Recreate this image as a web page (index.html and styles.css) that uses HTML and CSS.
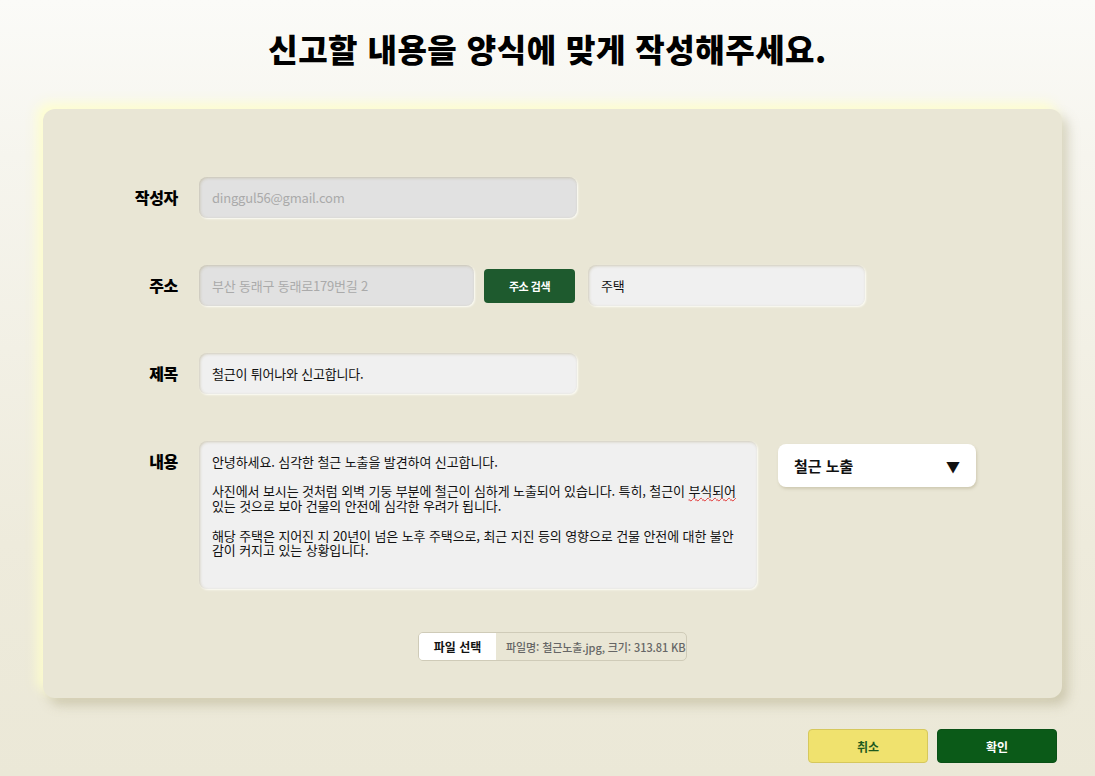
FILE: index.html
```html
<!DOCTYPE html>
<html lang="ko">
<head>
<meta charset="utf-8">
<title>신고하기</title>
<link rel="stylesheet" href="styles.css">
</head>
<body>
<div class="page">
  <h1 class="title">신고할 내용을 양식에 맞게 작성해주세요.</h1>
  <section class="card">
    <div class="row">
      <label class="label">작성자</label>
      <input class="field field-gray w378" type="text" placeholder="dinggul56@gmail.com">
    </div>
    <div class="row">
      <label class="label">주소</label>
      <input class="field field-gray w275" type="text" placeholder="부산 동래구 동래로179번길 2">
      <button class="btn-search" type="button">주소 검색</button>
      <input class="field w277 gap13" type="text" value="주택">
    </div>
    <div class="row">
      <label class="label">제목</label>
      <input class="field w378" type="text" value="철근이 튀어나와 신고합니다.">
    </div>
    <div class="row row-top">
      <label class="label">내용</label>
      <div class="area">안녕하세요. 심각한 철근 노출을 발견하여 신고합니다.

사진에서 보시는 것처럼 외벽 기둥 부분에 철근이 심하게 노출되어 있습니다. 특히, 철근이 <span class="spell">부식되어</span>
있는 것으로 보아 건물의 안전에 심각한 우려가 됩니다.

해당 주택은 지어진 지 20년이 넘은 노후 주택으로, 최근 지진 등의 영향으로 건물 안전에 대한 불안
감이 커지고 있는 상황입니다.</div>
      <div class="select"><span>철근 노출</span><span class="arrow">▼</span></div>
    </div>
    <div class="file">
      <span class="file-btn">파일 선택</span>
      <span class="file-name">파일명: 철근노출.jpg, 크기: 313.81 KB</span>
    </div>
  </section>
  <div class="actions">
    <button class="btn btn-cancel" type="button">취소</button>
    <button class="btn btn-ok" type="button">확인</button>
  </div>
</div>
</body>
</html>
```
FILE: styles.css
```css
* { box-sizing: border-box; }
html, body {
  margin: 0;
  height: 100%;
}
body {
  font-family: "Noto Sans CJK KR", "Noto Sans", sans-serif;
  background: linear-gradient(180deg, #fbfbf8 0%, #f6f5ee 20%, #eeebdc 70%, #ebe8d7 100%);
  color: #111;
  overflow: hidden;
}
.page {
  width: 1095px;
  height: 776px;
  padding-top: 28px;
}
.title {
  margin: 0;
  text-align: center;
  font-size: 32px;
  font-weight: 900;
  letter-spacing: 0.5px;
  line-height: 40px;
  color: #000;
}
.card {
  margin: 41px 33px 0 43px;
  height: 589px;
  background: #e9e6d5;
  border-radius: 12px;
  box-shadow: -6px -6px 12px rgba(255, 255, 205, 0.9), 6px 7px 12px rgba(150, 140, 100, 0.35);
  padding: 68px 0 0 90px;
  display: flex;
  flex-direction: column;
  gap: 47px;
}
.row {
  display: flex;
  align-items: center;
}
.row-top { align-items: flex-start; }
.label {
  width: 45px;
  margin-right: 21px;
  text-align: right;
  font-size: 16px;
  font-weight: 900;
  letter-spacing: -0.3px;
  line-height: 41px;
  color: #000;
  white-space: nowrap;
}
.field {
  height: 41px;
  border: none;
  border-radius: 8px;
  background: #f0f0f0;
  padding: 0 13px;
  font-family: inherit;
  font-size: 13px;
  color: #111;
  letter-spacing: -0.2px;
  outline: none;
  box-shadow: inset 1px 1px 3px rgba(170, 160, 120, 0.45), 1px 1px 2px rgba(255, 255, 250, 0.9);
}
.field-gray { background: #e1e1e1; }
.field::placeholder { color: #aaa; }
.w378 { width: 378px; }
.w275 { width: 275px; }
.w277 { width: 277px; }
.gap13 { margin-left: 13px; }
.btn-search {
  margin-left: 10px;
  width: 91px;
  height: 34px;
  border: none;
  border-radius: 4px;
  background: #1e5a2e;
  color: #fff;
  font-family: inherit;
  font-size: 11px;
  font-weight: 700;
  letter-spacing: -0.5px;
}
.area {
  width: 558px;
  height: 148px;
  border-radius: 8px;
  background: #f0f0f0;
  padding: 14px 12px 14px 13px;
  font-size: 13px;
  line-height: 14.7px;
  letter-spacing: -0.1px;
  white-space: pre-wrap;
  color: #111;
  box-shadow: inset 1px 1px 3px rgba(170, 160, 120, 0.45), 1px 1px 2px rgba(255, 255, 250, 0.9);
}
.spell {
  text-decoration: underline wavy #e03030;
  text-underline-offset: 1px;
  text-decoration-thickness: 1px;
}
.select {
  margin: 3px 0 0 21px;
  width: 198px;
  height: 43px;
  background: #fff;
  border-radius: 8px;
  box-shadow: 1px 2px 3px rgba(150, 140, 100, 0.3);
  display: flex;
  align-items: center;
  justify-content: space-between;
  padding: 0 16px 0 16px;
  font-size: 15px;
  font-weight: 700;
  color: #111;
}
.arrow { font-size: 14px; }
.file {
  align-self: center;
  margin: -4px 0 0 -90px;
  width: 269px;
  height: 29px;
  border: 1px solid #cfcbb8;
  border-radius: 5px;
  display: flex;
  align-items: center;
  font-size: 11px;
}
.file-btn {
  width: 77px;
  height: 27px;
  background: #fff;
  border-radius: 4px 0 0 4px;
  display: flex;
  align-items: center;
  justify-content: center;
  font-size: 12px;
  font-weight: 700;
  color: #111;
}
.file-name {
  margin-left: 10px;
  color: #666;
  font-weight: 500;
  letter-spacing: -0.1px;
  white-space: nowrap;
}
.actions {
  display: flex;
  justify-content: flex-end;
  gap: 9px;
  margin: 31px 38px 0 0;
}
.btn {
  width: 120px;
  height: 34px;
  border-radius: 4px;
  font-family: inherit;
  font-size: 12px;
  font-weight: 700;
}
.btn-cancel {
  background: #f0e26e;
  border: 1px solid #d6c85c;
  color: #1e5a1e;
}
.btn-ok {
  background: #0b5a18;
  border: 1px solid #0a5016;
  color: #fff;
}
```
